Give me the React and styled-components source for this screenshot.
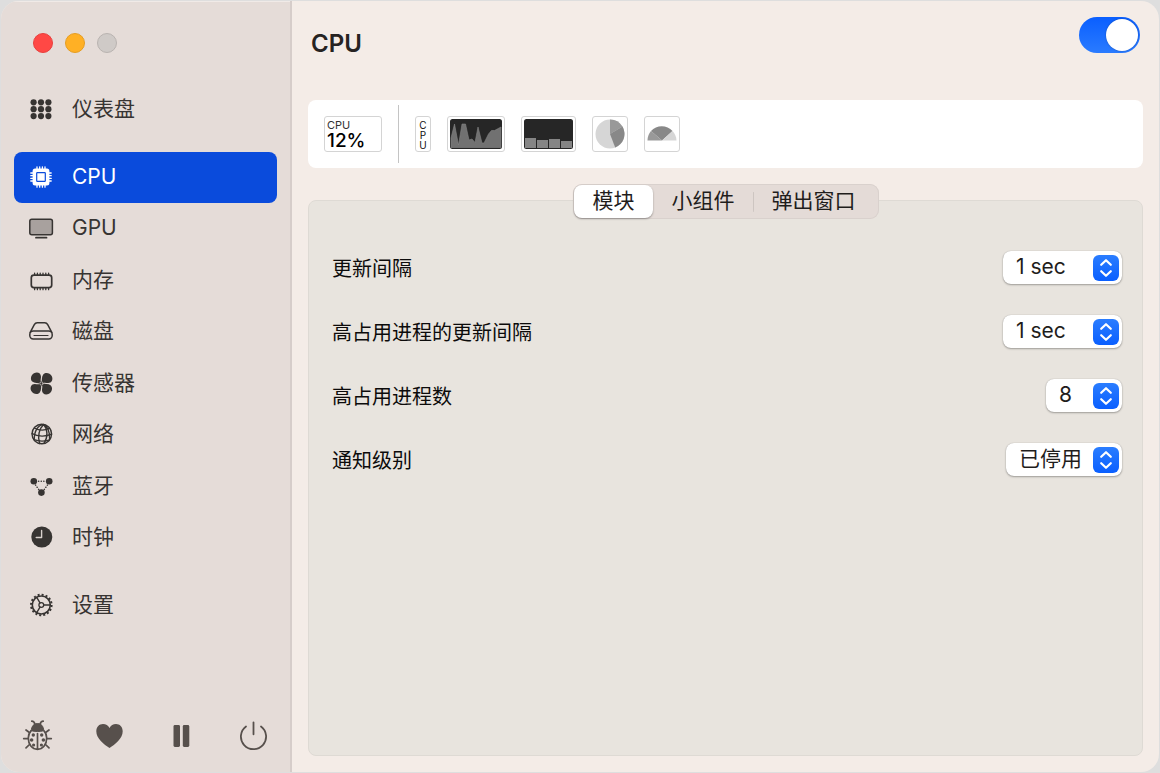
import {useState} from "react";
import styled, {createGlobalStyle} from "styled-components";

const GlobalStyle = createGlobalStyle`
  * {
    box-sizing: border-box;
  }
  body {
    margin: 0;
    background: #dedede;
    font-family: Inter, "Noto Sans CJK SC", sans-serif;
    color: #373432;
  }
  button, select, input {
    font-family: inherit;
    color: inherit;
    margin: 0;
  }
`;

const Window = styled.div`
  min-height: calc(100vh - 2px);
  margin: 1px;
  display: grid;
  grid-template-columns: 291px 1fr;
  background: #f4ece7;
  border-radius: 18px;
  overflow: hidden;
`;

const Sidebar = styled.aside`
  display: flex;
  flex-direction: column;
  background: #e5dcd8;
  border-right: 2px solid #d6cdca;
  box-shadow: inset 0 1px #f0eae7;
  padding: 32px 13px 17px;
`;

const Lights = styled.div`
  display: flex;
  gap: 12px;
  padding-left: 19px;
  margin-bottom: 31px;
`;

const Light = styled.button`
  width: 20px;
  height: 20px;
  padding: 0;
  border: 1px solid ${props => props.$edge};
  border-radius: 50%;
  background: ${props => props.$color};
`;

const Nav = styled.nav`
  display: flex;
  flex-direction: column;
  gap: 17px;
`;

const NavGroup = styled.div`
  height: 411px;
  display: flex;
  flex-direction: column;
  justify-content: space-between;
`;

const NavLink = styled.a`
  display: flex;
  align-items: center;
  gap: 16px;
  height: 51px;
  padding: 0 12px 1px;
  border-radius: 8px;
  font-size: 21px;
  line-height: 30px;
  text-decoration: none;
  color: ${props => props.$active ? "#fff" : "#373432"};
  background: ${props => props.$active ? "#0a4bdc" : "transparent"};

  svg {
    flex: none;
  }
`;

const Footer = styled.footer`
  display: flex;
  gap: 32px;
  margin-top: auto;
  padding-left: 4px;
`;

const FooterButton = styled.button`
  width: 40px;
  height: 40px;
  padding: 0;
  border: 0;
  background: none;
  color: #57504c;

  svg {
    display: block;
  }
`;

const Main = styled.main`
  display: flex;
  flex-direction: column;
  padding: 16px;
`;

const Header = styled.header`
  display: flex;
  justify-content: space-between;
  height: 83px;
  padding: 0 3px;
`;

const Title = styled.h1`
  margin: 11px 0 0;
  font-size: 24px;
  line-height: 32px;
  font-weight: 600;
  color: #262322;
`;

const Toggle = styled.input`
  appearance: none;
  width: 61px;
  height: 36px;
  border-radius: 18px;
  padding: 2px;
  display: flex;
  justify-content: ${props => props.checked ? "flex-end" : "flex-start"};
  background: ${props => props.checked ? "linear-gradient(#0a5fff, #2a7bff)" : "#cfc8c4"};

  &::before {
    content: "";
    width: 32px;
    height: 32px;
    border-radius: 50%;
    background: #fff;
    box-shadow: 0 0 2px rgba(0, 0, 0, .3);
  }
`;

const Preview = styled.section`
  display: flex;
  align-items: center;
  gap: 16px;
  height: 68px;
  padding: 0 16px;
  border-radius: 8px;
  background: #fff;
`;

const Widget = styled.div`
  width: ${props => props.$width}px;
  height: 36px;
  flex: none;
  border: 1px solid #d4d4d4;
  border-radius: 3px;
  padding: ${props => props.$pad || 0}px;
  color: #111;
  background: #fff;

  svg {
    display: block;
  }
`;

const MiniLabel = styled.div`
  padding: 2px 0 0 2px;
  font-size: 11px;
  line-height: 13px;
  color: #333;
`;

const MiniValue = styled.div`
  padding-left: 2px;
  font-size: 19px;
  line-height: 18px;
  font-weight: 500;
  color: #000;
`;

const Stack = styled.div`
  display: flex;
  flex-direction: column;
  align-items: center;
  padding-top: 3px;
  font-size: 10px;
  line-height: 10px;
`;

const Divider = styled.div`
  width: 1px;
  height: 58px;
  background: #c4c4c4;
`;

const Tabs = styled.div`
  position: relative;
  align-self: center;
  display: flex;
  height: 35px;
  margin: 16px 0 -19px;
  padding: 1px;
  border-radius: 9px;
  background: #e4dbd7;
  box-shadow: inset 0 0 0 1px #d9d1cd;
`;

const Tab = styled.button`
  padding: 0 18px 1px 19px;
  border: 0;
  border-radius: 8px;
  font-size: 21px;
  line-height: 30px;
  color: #1f1d1c;
  background: ${props => props.$active ? "#fff" : "none"};
  box-shadow: ${props => props.$active ? "0 1px 2px rgba(0, 0, 0, .35)" : "none"};

  &:last-child {
    padding-right: 22px;
    background: linear-gradient(#cdc5c1, #cdc5c1) 0 50% / 1px 20px no-repeat;
  }
`;

const Panel = styled.section`
  flex: 1;
  padding: 34px 20px;
  border: 1px solid #dedad4;
  border-radius: 8px;
  background: #e8e4de;
`;

const Row = styled.div`
  display: flex;
  align-items: center;
  justify-content: space-between;
  height: 64px;
  padding-left: 3px;
`;

const RowLabel = styled.label`
  padding-top: 3px;
  font-size: 20px;
  line-height: 28px;
  color: #0c0b0b;
`;

const SelectWrapper = styled.div`
  position: relative;
  display: flex;

  svg {
    position: absolute;
    right: 3px;
    top: 4px;
    pointer-events: none;
  }
`;

const Select = styled.select`
  appearance: none;
  width: ${props => props.$width}px;
  height: 33px;
  padding: 0 32px 0 13px;
  border: 0;
  border-radius: 8px;
  font-size: 21px;
  line-height: 30px;
  color: #1f1d1c;
  background: #fff;
  box-shadow: 0 0 1px rgba(0, 0, 0, .25), 0 1px 2px rgba(0, 0, 0, .3);
`;

function Icon({size = 30, children}) {
    return (
        <svg width={size} height={size} viewBox={`0 0 ${size} ${size}`} fill="none" stroke="currentColor" strokeWidth="1.5" strokeLinecap="round" strokeLinejoin="round" aria-hidden="true">
            {children}
        </svg>
    );
}

function GridIcon() {
    return (
        <Icon>
            <g fill="currentColor" stroke="none">
                {[7.6, 15, 22.4].map(x => [8.3, 15.2, 22.1].map(y => (
                    <circle key={x + "-" + y} cx={x} cy={y} r="3.1"/>
                )))}
            </g>
        </Icon>
    );
}

function CpuIcon() {
    return (
        <Icon>
            <path d="M11 4.8v20.4M13.7 4.8v20.4M16.4 4.8v20.4M19 4.8v20.4M4.8 11h20.4M4.8 13.7h20.4M4.8 16.4h20.4M4.8 19h20.4" strokeWidth="1.3"/>
            <rect x="6.6" y="6.6" width="16.8" height="16.8" rx="2.5" fill="currentColor" stroke="none"/>
            <rect x="10.7" y="10.7" width="8.6" height="8.6" rx=".6" stroke="#0a4bdc" strokeWidth="1.2"/>
        </Icon>
    );
}

function DisplayIcon() {
    return (
        <Icon>
            <rect x="3.8" y="6.3" width="22.6" height="15.4" rx="2" fill="#a8a19e"/>
            <path d="M10 24.7h10.5" strokeWidth="1.8"/>
        </Icon>
    );
}

function MemoryIcon() {
    return (
        <Icon>
            <rect x="5.3" y="10.2" width="20.4" height="12.4" rx="2.6" strokeWidth="1.7"/>
            <path d="M8.6 8.1v2M11.4 8.1v2M14.2 8.1v2M17 8.1v2M19.8 8.1v2M22.6 8.1v2M8.6 22.7v2M11.4 22.7v2M14.2 22.7v2M17 22.7v2M19.8 22.7v2M22.6 22.7v2" strokeWidth="1.3"/>
        </Icon>
    );
}

function DiskIcon() {
    return (
        <Icon>
            <path d="M4.2 16.3 8.3 8.6c.7-1.3 1.5-1.9 2.9-1.9h7.6c1.4 0 2.2.6 2.9 1.9l4.1 7.7"/>
            <rect x="3.8" y="15" width="22.4" height="8" rx="3.4"/>
            <path d="M8 19.5h14" strokeWidth="1.2"/>
        </Icon>
    );
}

function FanIcon() {
    return (
        <Icon>
            <g fill="currentColor" stroke="none">
                {[0, 90, 180, 270].map(angle => (
                    <path key={angle} transform={`rotate(${angle} 15.5 15.5)`} d="M15.5 15.5C12 14.9 8.5 15.600 6.200 13.600 4 11.500 4.800 7 8 5.300 11.500 3.600 15 5.200 15 8.800 15 11 14 12.300 15.500 15.500Z"/>
                ))}
            </g>
            <circle cx="15.5" cy="15.5" r="2.6" fill="currentColor" stroke="none"/>
            <circle cx="15.5" cy="15.5" r="1.7" stroke="#cbc3bf" strokeWidth=".9"/>
        </Icon>
    );
}

function GlobeIcon() {
    return (
        <Icon>
            <g strokeWidth="1.4">
                <circle cx="15.8" cy="15" r="9.8"/>
                <path d="M17.6 5.4C13.2 9.5 11.3 17.5 13.6 24.5M17.6 5.4c4 4.8 4.7 12.6.4 18.9M17.6 5.4C12.4 6 8.3 11.2 8.2 20.8M17.6 5.4c3.7 1.8 6.1 6.8 6 14.6"/>
                <path d="M8.3 9c4.5 2.5 10.8 2.5 15.4.2M6.2 14.6c5.7 3.2 13.7 3.2 19.3.6M8 20.7c4.8 1.7 10.8 1.7 15.6.1"/>
            </g>
        </Icon>
    );
}

function NodesIcon() {
    return (
        <Icon>
            <g fill="currentColor" stroke="none">
                <circle cx="7.8" cy="10.3" r="3.3"/>
                <circle cx="23.2" cy="10.3" r="3.3"/>
                <circle cx="15.4" cy="21.6" r="3.3"/>
            </g>
            <path d="M12.6 10.3h7M9.6 14.1l3.6 5M21.4 14.1l-3.6 5" strokeDasharray=".1 2.5"/>
        </Icon>
    );
}

function ClockIcon() {
    return (
        <Icon>
            <circle cx="15.8" cy="15" r="10.5" fill="currentColor" stroke="none"/>
            <path d="M15.6 8.5V15.500H10.2" stroke="#d8d0cc" strokeWidth="1.4"/>
        </Icon>
    );
}

function GearIcon() {
    return (
        <Icon>
            <circle cx="15.3" cy="15" r="9" strokeWidth="1.6"/>
            <circle cx="15.3" cy="15" r="10.3" strokeWidth="2" strokeLinecap="butt" strokeDasharray="2 2.045"/>
            <circle cx="15.3" cy="15" r="2.4" strokeWidth="1.3"/>
            <path d="M17.8 15H24M14 12.8l-3.4-5.6M14 17.2l-3.4 5.6" strokeWidth="1.4"/>
        </Icon>
    );
}

function BugIcon() {
    return (
        <Icon size={40}>
            <g strokeWidth="1.7">
                <path d="M13.8 6.2c2 0 2.6 1 3 3M25.2 6.2c-2 0-2.6 1-3 3"/>
                <path d="M13.2 15.7c.5-4.7 2.6-7.2 6.3-7.2s5.8 2.5 6.3 7.2c-3.7 1.1-8.9 1.1-12.6 0Z" fill="currentColor" strokeWidth="1"/>
                <path d="M13 15.8c-1.7 1.8-2.7 4.3-2.7 7.2 0 6.5 3.7 11.3 9.2 11.3s9.2-4.8 9.2-11.3c0-2.9-1-5.4-2.7-7.2M19.5 18.5v15.5"/>
                <path d="M11.4 17.5 8 15M27.6 17.5 31 15M10 23.6H5.7M29 23.6h4.3M11.5 29.5 8 32.8M27.5 29.5l3.5 3.3"/>
            </g>
            <g fill="currentColor" stroke="none">
                <circle cx="15.3" cy="20" r="1.7"/>
                <circle cx="23.7" cy="20" r="1.7"/>
                <circle cx="13.6" cy="25" r="1.8"/>
                <circle cx="25.4" cy="25" r="1.8"/>
                <circle cx="15.6" cy="30" r="1.6"/>
                <circle cx="23.4" cy="30" r="1.6"/>
            </g>
        </Icon>
    );
}

function HeartIcon() {
    return (
        <Icon size={40}>
            <path fill="currentColor" stroke="none" d="M19.5 33C14 29.5 6.3 23.5 6.3 16.3 6.3 11.8 9.3 9 13 9c2.9 0 5.2 1.5 6.5 4C20.8 10.5 23.1 9 26 9c3.7 0 6.7 2.8 6.7 7.3C32.7 23.5 25 29.5 19.5 33Z"/>
        </Icon>
    );
}

function PauseIcon() {
    return (
        <Icon size={40}>
            <rect x="11.5" y="10" width="6.5" height="22" rx="1.4" fill="currentColor" stroke="none"/>
            <rect x="20.8" y="10" width="6.5" height="22" rx="1.4" fill="currentColor" stroke="none"/>
        </Icon>
    );
}

function PowerIcon() {
    return (
        <Icon size={40}>
            <path d="M19.5 7.3v12M12 11.5a12.6 12.6 0 1 0 15 0" strokeWidth="1.8"/>
        </Icon>
    );
}

function StepperIcon() {
    return (
        <svg width="26" height="26" viewBox="0 0 26 26" aria-hidden="true">
            <defs>
                <linearGradient id="stepper" x1="0" y1="0" x2="0" y2="1">
                    <stop offset="0" stopColor="#2a7dff"/>
                    <stop offset="1" stopColor="#0a5fff"/>
                </linearGradient>
            </defs>
            <rect width="26" height="26" rx="6" fill="url(#stepper)"/>
            <path d="M8.2 9.8 13 5.2l4.8 4.6M8.2 16.2 13 20.8l4.8-4.6" fill="none" stroke="#fff" strokeWidth="2.2" strokeLinecap="round" strokeLinejoin="round"/>
        </svg>
    );
}

function LineChart() {
    return (
        <svg width="52" height="30" viewBox="0 0 52 30" aria-hidden="true">
            <rect width="52" height="30" rx="2.5" fill="#262626"/>
            <path d="M1 19 4.5 5l4 21L12 5h3.5L19 21l3-1 3 3.5L28 8l4 16h2l4.5-9 3-3.5h3L51 8v20.5H1Z" fill="#717171" stroke="#858585" strokeWidth=".6"/>
        </svg>
    );
}

function BarChart() {
    return (
        <svg width="49" height="30" viewBox="0 0 49 30" aria-hidden="true">
            <rect width="49" height="30" rx="2.5" fill="#262626"/>
            <g fill="#858585">
                <rect x="1" y="19" width="11" height="10"/>
                <rect x="13" y="21" width="11" height="8"/>
                <rect x="25" y="20" width="11" height="9"/>
                <rect x="37" y="22" width="11" height="7"/>
            </g>
        </svg>
    );
}

function PieChart() {
    return (
        <svg width="34" height="34" viewBox="0 0 34 34" aria-hidden="true">
            <circle cx="17" cy="17" r="14.5" fill="#d6d6d6"/>
            <path d="M17 17V2.5A14.5 14.5 0 0 1 29.5 9.6Z" fill="#999"/>
            <path d="M17 17 29.5 9.6A14.5 14.5 0 0 1 22.2 30.5Z" fill="#888"/>
        </svg>
    );
}

function GaugeChart() {
    return (
        <svg width="34" height="34" viewBox="0 0 34 34" aria-hidden="true">
            <path d="M17 23.5H2.5A14.5 14.5 0 0 1 6 14Z" fill="#999"/>
            <path d="M17 23.5 6 14A14.5 14.5 0 0 1 27.5 14Z" fill="#888"/>
            <path d="M17 23.5 27.5 14A14.5 14.5 0 0 1 31.5 23.5Z" fill="#d6d6d6"/>
        </svg>
    );
}

const modules = [
    {name: "CPU", icon: CpuIcon},
    {name: "GPU", icon: DisplayIcon},
    {name: "内存", icon: MemoryIcon},
    {name: "磁盘", icon: DiskIcon},
    {name: "传感器", icon: FanIcon},
    {name: "网络", icon: GlobeIcon},
    {name: "蓝牙", icon: NodesIcon},
    {name: "时钟", icon: ClockIcon},
];

const settings = [
    {id: "interval", label: "更新间隔", value: "1 sec", width: 119},
    {id: "top-interval", label: "高占用进程的更新间隔", value: "1 sec", width: 119},
    {id: "top-count", label: "高占用进程数", value: "8", width: 76},
    {id: "notify", label: "通知级别", value: "已停用", width: 116},
];

const tabs = ["模块", "小组件", "弹出窗口"];

function NavItem({name, icon: ItemIcon, active, onSelect}) {
    return (
        <NavLink href="#" $active={active} onClick={() => onSelect(name)}>
            <ItemIcon/>
            {name}
        </NavLink>
    );
}

export default function App() {
    const [page, setPage] = useState("CPU");
    const [tab, setTab] = useState("模块");
    const [enabled, setEnabled] = useState(true);

    return (
        <>
            <GlobalStyle/>
            <Window>
                <Sidebar>
                    <Lights>
                        <Light $color="#ff4845" $edge="#e8403e" aria-label="关闭"/>
                        <Light $color="#ffb025" $edge="#e59d22" aria-label="最小化"/>
                        <Light $color="#cfcac7" $edge="#b9b3b0" aria-label="缩放"/>
                    </Lights>
                    <Nav>
                        <NavItem name="仪表盘" icon={GridIcon} active={page === "仪表盘"} onSelect={setPage}/>
                        <NavGroup>
                            {modules.map(item => (
                                <NavItem key={item.name} {...item} active={page === item.name} onSelect={setPage}/>
                            ))}
                        </NavGroup>
                        <NavItem name="设置" icon={GearIcon} active={page === "设置"} onSelect={setPage}/>
                    </Nav>
                    <Footer>
                        <FooterButton aria-label="报告问题"><BugIcon/></FooterButton>
                        <FooterButton aria-label="支持"><HeartIcon/></FooterButton>
                        <FooterButton aria-label="暂停"><PauseIcon/></FooterButton>
                        <FooterButton aria-label="退出"><PowerIcon/></FooterButton>
                    </Footer>
                </Sidebar>

                <Main>
                    <Header>
                        <Title>CPU</Title>
                        <Toggle type="checkbox" role="switch" aria-label="CPU" checked={enabled} onChange={() => setEnabled(!enabled)}/>
                    </Header>

                    <Preview>
                        <Widget $width={58}>
                            <MiniLabel>CPU</MiniLabel>
                            <MiniValue>12%</MiniValue>
                        </Widget>
                        <Divider/>
                        <Widget $width={16}>
                            <Stack>
                                <span>C</span>
                                <span>P</span>
                                <span>U</span>
                            </Stack>
                        </Widget>
                        <Widget $width={58} $pad={2}><LineChart/></Widget>
                        <Widget $width={55} $pad={2}><BarChart/></Widget>
                        <Widget $width={36}><PieChart/></Widget>
                        <Widget $width={36}><GaugeChart/></Widget>
                    </Preview>

                    <Tabs role="tablist">
                        {tabs.map(name => (
                            <Tab key={name} role="tab" aria-selected={tab === name} $active={tab === name} onClick={() => setTab(name)}>
                                {name}
                            </Tab>
                        ))}
                    </Tabs>

                    <Panel>
                        {settings.map(item => (
                            <Row key={item.id}>
                                <RowLabel htmlFor={item.id}>{item.label}</RowLabel>
                                <SelectWrapper>
                                    <Select id={item.id} $width={item.width}>
                                        <option>{item.value}</option>
                                    </Select>
                                    <StepperIcon/>
                                </SelectWrapper>
                            </Row>
                        ))}
                    </Panel>
                </Main>
            </Window>
        </>
    );
}
